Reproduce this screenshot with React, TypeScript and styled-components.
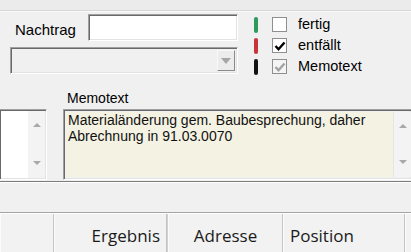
import React from "react";
import styled, { createGlobalStyle, css } from "styled-components";

const Global = createGlobalStyle`
  html, body { margin: 0; padding: 0; background: #f0f0f0; }
  body { font-family: "Liberation Sans", Arial, sans-serif; }
`;

const sunken = css`
  border: 1px solid;
  border-color: #a0a0a0 #ffffff #ffffff #a0a0a0;
  box-shadow: inset 1px 1px 0 #696969, inset -1px -1px 0 #e3e3e3;
  box-sizing: border-box;
`;

const Screen = styled.div`
  width: 411px;
  height: 252px;
  overflow: hidden;
  background: #f0f0f0;
  display: flex;
  flex-direction: column;
  color: #000;
`;

const TopStrip = styled.div`
  height: 10px;
  flex: none;
  background: #ebebeb;
  border-bottom: 1px solid #d6d6d6;
  box-shadow: 0 1px 0 #fbfbfb;
`;

const TopSection = styled.div`
  height: 75px;
  flex: none;
  display: flex;
  padding: 3px 0 0 10px;
  box-sizing: border-box;
`;

const FieldColumn = styled.div`
  width: 228px;
  display: flex;
  flex-direction: column;
  gap: 6px;
`;

const FieldRow = styled.div`
  display: flex;
  align-items: center;
  height: 27px;
`;

const Label = styled.span<{ $size?: number }>`
  font-size: ${(p) => p.$size ?? 15}px;
  line-height: 1;
  white-space: nowrap;
`;

const NachtragLabel = styled(Label)`
  width: 73px;
  padding-left: 5px;
  padding-top: 3px;
`;

const TextInput = styled.div`
  ${sunken};
  width: 150px;
  height: 27px;
  background: #ffffff;
`;

const Combo = styled.div`
  ${sunken};
  width: 228px;
  height: 27px;
  background: #f0f0f0;
  display: flex;
  justify-content: flex-end;
  padding: 2px;
`;

const DropButton = styled.div`
  width: 18px;
  height: 21px;
  box-sizing: border-box;
  background: #ececec;
  border: 1px solid;
  border-color: #f8f8f8 #8a8a8a #8a8a8a #f8f8f8;
  display: flex;
  align-items: center;
  justify-content: center;
`;

const Indicators = styled.div`
  margin-left: 16px;
  display: flex;
  flex-direction: column;
`;

const IndicatorRow = styled.div`
  height: 21px;
  display: flex;
  align-items: center;
`;

const Bar = styled.div<{ $color: string }>`
  width: 4px;
  height: 16px;
  border-radius: 2px;
  background: ${(p) => p.$color};
`;

const Box = styled.div<{ $disabled?: boolean }>`
  width: 15px;
  height: 15px;
  box-sizing: border-box;
  margin-left: 14px;
  margin-right: 11px;
  border: 1px solid #8e8f8f;
  background: ${(p) => (p.$disabled ? "#f4f4f4" : "#ffffff")};
  display: flex;
  align-items: center;
  justify-content: center;
`;

const MemoLabelRow = styled.div`
  height: 23px;
  flex: none;
  padding-left: 67px;
  display: flex;
  align-items: center;
`;

const MemoRow = styled.div`
  height: 72px;
  flex: none;
  display: flex;
  gap: 16px;
`;

const ListBox = styled.div`
  ${sunken};
  border-left: none;
  width: 47px;
  height: 71px;
  background: #ffffff;
  display: flex;
  justify-content: flex-end;
  padding: 1px 1px 1px 0;
`;

const Scrollbar = styled.div`
  width: 17px;
  flex: none;
  background: #f3f3f3;
  display: flex;
  flex-direction: column;
  justify-content: space-between;
  align-items: center;
  padding: 11px 0 12px;
  box-sizing: border-box;
`;

const MemoBox = styled.div`
  ${sunken};
  border-right: none;
  flex: 1;
  height: 71px;
  display: flex;
  padding: 2px 0 2px 2px;
`;

const MemoText = styled.div`
  flex: 1;
  background: #f4f2e2;
  font-size: 14px;
  line-height: 16px;
  padding: 0 0 0 2px;
  color: #111;
  border-right: 1px solid #e4e4e4;
`;

const Band = styled.div`
  height: 32px;
  flex: none;
  border-top: 1px solid #7c7c7c;
  border-bottom: 1px solid #a3a3a3;
  box-shadow: inset 0 1px 0 #ffffff;
  box-sizing: border-box;
  background: #f0f0f0;
`;

const HeaderRow = styled.div`
  flex: 1;
  display: flex;
  border-top: 1px solid #ffffff;
  background: #f2f2f2;
  font-family: "Open Sans", "Liberation Sans", sans-serif;
  font-size: 17px;
  color: #1a1a1a;
`;

const HeaderCell = styled.div<{ $width: number; $align: "left" | "center" | "right" }>`
  width: ${(p) => p.$width}px;
  flex: none;
  box-sizing: border-box;
  border-right: 1px solid #c4c4c4;
  border-left: 1px solid #fbfbfb;
  display: flex;
  align-items: center;
  justify-content: ${(p) =>
    p.$align === "left" ? "flex-start" : p.$align === "right" ? "flex-end" : "center"};
  padding: 5px 6px 0;
  white-space: nowrap;
  overflow: hidden;
`;

const Gap = styled.div`
  width: 1px;
  flex: none;
  background: #d0d0d0;
`;

const Check = ({ color }: { color: string }) => (
  <svg width="12" height="12" viewBox="0 0 12 12">
    <path d="M1.5 6 L4.5 9.2 L10.5 2.5" fill="none" stroke={color} strokeWidth="2.4" />
  </svg>
);

const Arrow = ({ up }: { up?: boolean }) => (
  <svg width="8" height="5" viewBox="0 0 8 5">
    <path d={up ? "M0 5 L4 1 L8 5 Z" : "M0 0 L8 0 L4 4 Z"} fill="#a8a8a8" />
  </svg>
);

export default function App() {
  return (
    <>
      <Global />
      <Screen>
        <TopStrip />
        <TopSection>
          <FieldColumn>
            <FieldRow>
              <NachtragLabel>Nachtrag</NachtragLabel>
              <TextInput />
            </FieldRow>
            <Combo>
              <DropButton>
                <svg width="10" height="6" viewBox="0 0 10 6">
                  <path d="M0 0 L10 0 L5 6 Z" fill="#a6a6a6" />
                </svg>
              </DropButton>
            </Combo>
          </FieldColumn>
          <Indicators>
            <IndicatorRow>
              <Bar $color="#2b9a5b" />
              <Box />
              <Label $size={14.5}>fertig</Label>
            </IndicatorRow>
            <IndicatorRow>
              <Bar $color="#c9333a" />
              <Box>
                <Check color="#000" />
              </Box>
              <Label $size={14.5}>entfällt</Label>
            </IndicatorRow>
            <IndicatorRow>
              <Bar $color="#111111" />
              <Box $disabled>
                <Check color="#a2a2a2" />
              </Box>
              <Label $size={14.5}>Memotext</Label>
            </IndicatorRow>
          </Indicators>
        </TopSection>
        <MemoLabelRow>
          <Label $size={14}>Memotext</Label>
        </MemoLabelRow>
        <MemoRow>
          <ListBox>
            <Scrollbar>
              <Arrow up />
              <Arrow />
            </Scrollbar>
          </ListBox>
          <MemoBox>
            <MemoText>
              Materialänderung gem. Baubesprechung, daher
              <br />
              Abrechnung in 91.03.0070
            </MemoText>
            <Scrollbar>
              <Arrow up />
              <Arrow />
            </Scrollbar>
          </MemoBox>
        </MemoRow>
        <Band />
        <HeaderRow>
          <HeaderCell $width={54} $align="left" />
          <HeaderCell $width={113} $align="right">Ergebnis</HeaderCell>
          <Gap />
          <HeaderCell $width={115} $align="center">Adresse</HeaderCell>
          <HeaderCell $width={122} $align="left">Position</HeaderCell>
          <HeaderCell $width={40} $align="left">Menge</HeaderCell>
        </HeaderRow>
      </Screen>
    </>
  );
}
